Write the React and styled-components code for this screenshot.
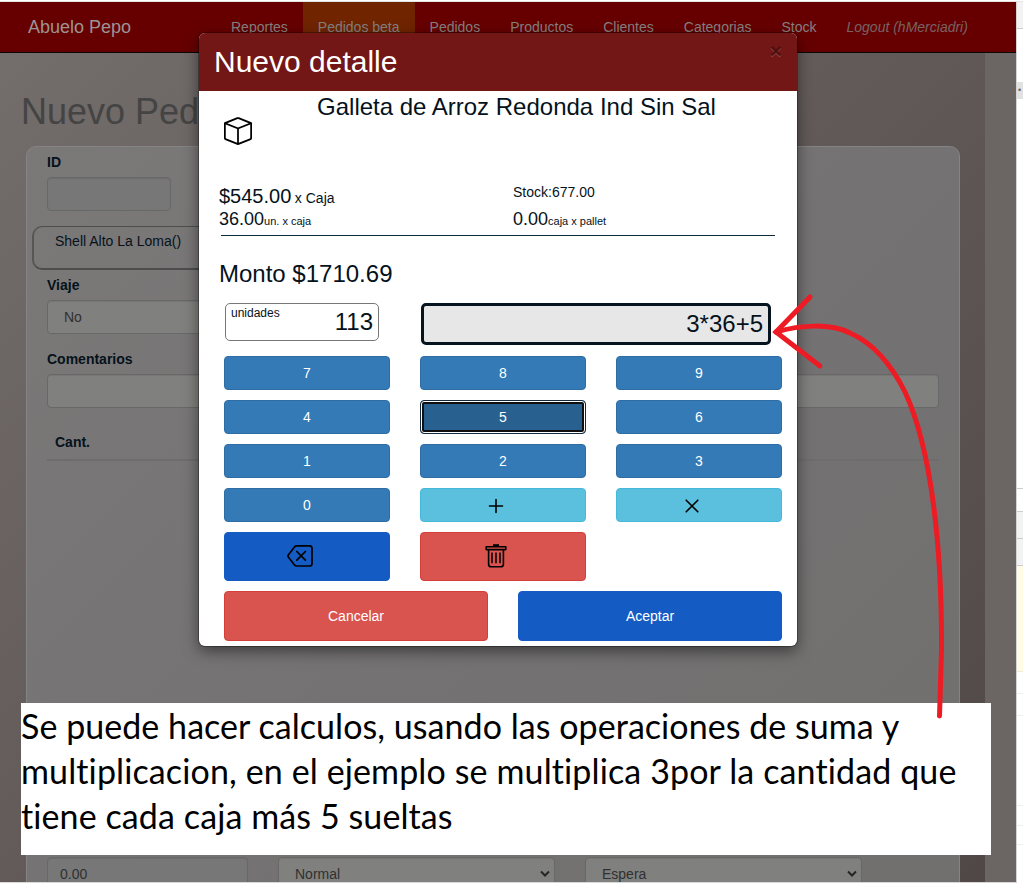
import React from "react";
import styled, { createGlobalStyle, css } from "styled-components";
import { BsBox } from "react-icons/bs";

const Global = createGlobalStyle`
  * { box-sizing: border-box; }
  body { margin: 0; background: #fff; font: 14px/20px "Liberation Sans", Arial, sans-serif; color: #05121c; overflow: hidden; }
  button { font: inherit; }
`;

const Screen = styled.div`
  position: relative;
  display: grid;
  grid-template-columns: 1016px 7px;
  width: 1023px;
  height: 889px;
  padding-top: 2px;
  background: linear-gradient(#e4e4e4, #e4e4e4) 0 1px / 100% 1px no-repeat, #fff;
  overflow: hidden;
`;
const Page = styled.div`
  display: flex;
  flex-direction: column;
  height: 881px;
  background: #6b6664;
  border-bottom: 1px solid #d8d8d8;
  overflow: hidden;
`;
const Navbar = styled.nav`
  display: flex;
  flex: none;
  height: 51px;
  padding-left: 28px;
  background: #660000;
  border-bottom: 1px solid #080808;
  color: #858080;
`;
const Brand = styled.div`
  width: 188px;
  padding-top: 15px;
  font-size: 18px;
  color: #9b9494;
`;
const NavLink = styled.a`
  padding: 15px;
  background: ${(p) => (p.$active ? "#702400" : "transparent")};
  font-style: ${(p) => (p.$italic ? "italic" : "normal")};
  color: ${(p) => (p.$italic ? "#766363" : "inherit")};
`;
const Content = styled.main`
  width: 985px;
  flex: 1;
  min-height: 0;
  padding: 39px 25px 0 26px;
  background: linear-gradient(135deg, #736d6b 0%, #615a59 48%, #4f4847 100%);
  overflow: hidden;
`;
const Heading = styled.h1`
  margin: 0 0 14px -5px;
  font-size: 36px;
  line-height: 40px;
  font-weight: 400;
  color: #444;
`;
const Panel = styled.section`
  width: 934px;
  height: 760px;
  padding: 5px 20px;
  border: 1px solid #858383;
  border-radius: 10px;
  background: linear-gradient(135deg, #7b7978 0%, #747273 50%, #71706e 100%);
`;
const Label = styled.label`
  display: block;
  height: 20px;
  margin-bottom: 5px;
  font-weight: 700;
`;
const Field = styled.div`
  display: flex;
  align-items: center;
  justify-content: space-between;
  width: ${(p) => p.$w}px;
  height: 34px;
  margin-bottom: ${(p) => p.$mb || 0}px;
  padding: 0 ${(p) => (p.$select ? 4 : 12)}px 0 ${(p) => p.$pad || 12}px;
  border: 1px solid #686868;
  border-radius: 4px;
  background: ${(p) => (p.$readOnly ? "#777777" : "#80807f")};
  box-shadow: inset 0 1px 1px rgba(0, 0, 0, 0.08);
  color: #303030;
`;
const ClientBox = styled.div`
  width: 400px;
  height: 44px;
  margin: 0 0 5px -15px;
  padding: 4px 21px;
  border: 2px solid #4c4e4e;
  border-top-width: 1px;
  border-left-color: #555757;
  border-radius: 10px;
`;
const TableHead = styled.div`
  height: 37px;
  padding: 8px;
  border-bottom: 2px solid #6e6d6d;
  font-weight: 700;
`;
const TotalsRow = styled.div`
  display: flex;
  gap: 30px;
  margin-top: 396px;
`;
const Rail = styled.aside`
  display: flex;
  flex-direction: column;
  height: 881px;
  border-left: 1px solid #d4d4d4;
`;
const RailCell = styled.div`
  flex: none;
  height: ${(p) => p.$h}px;
  background: ${(p) => p.$bg || "#fff"};
  border-bottom: ${(p) => (p.$line ? `1px solid ${p.$line}` : "0")};
  font-size: 9px;
  padding-left: 1px;
  line-height: 17px;
  color: #666;
  overflow: hidden;
`;

const Modal = styled.section`
  position: absolute;
  left: 199px;
  top: 33px;
  width: 598px;
  height: 613px;
  border-radius: 6px;
  background: #fff;
  box-shadow: 0 0 0 1px rgba(0, 0, 0, 0.28), 0 5px 15px rgba(0, 0, 0, 0.5);
  overflow: hidden;
`;
const ModalHeader = styled.header`
  display: flex;
  justify-content: space-between;
  height: 58px;
  padding: 8px 15px 0;
  background: #731616;
  color: #fff;
`;
const ModalTitle = styled.h2`
  margin: 0;
  font-size: 30px;
  line-height: 42px;
  font-weight: 400;
`;
const Close = styled.button`
  height: 20px;
  padding: 0;
  border: 0;
  background: none;
  font-size: 21px;
  line-height: 18px;
  font-weight: 700;
  color: #501010;
  text-shadow: 0 1px 0 #94494a;
`;
const ProductRow = styled.div`
  display: grid;
  grid-template-columns: 53px 529px;
  height: 91px;
  svg { margin: 26px 0 0 25px; }
`;
const ProductName = styled.h3`
  margin: 0;
  padding-top: 2px;
  text-align: center;
  font-size: 24px;
  line-height: 28px;
  font-weight: 400;
`;
const Facts = styled.div`
  display: grid;
  grid-template-columns: 294px 1fr;
  grid-template-rows: 24px 25px;
  height: 54px;
  margin: 0 22px;
  border-bottom: 1px solid #082a3a;
`;
const Fact = styled.div`
  margin-left: -2px;
  padding-top: ${(p) => p.$top || 0}px;
  font-size: ${(p) => p.$size}px;
  line-height: ${(p) => p.$line || 24}px;
  white-space: nowrap;
`;
const Small = styled.small`
  margin-left: ${(p) => p.$shift || 0}px;
  font-size: ${(p) => p.$size}px;
`;
const Amount = styled.div`
  margin: 24px 0 0 20px;
  height: 43px;
  font-size: 24px;
  line-height: 28px;
`;
const Readouts = styled.div`
  display: flex;
  justify-content: space-between;
  height: 53px;
  margin: 0 26px;
`;
const Units = styled.div`
  display: flex;
  justify-content: space-between;
  width: 154px;
  height: 38px;
  padding: 0 5px;
  border: 1px solid #777;
  border-radius: 5px;
  font-size: 24px;
  line-height: 36px;
`;
const UnitsLabel = styled.span`
  font-size: 12px;
  line-height: 18px;
`;
const Expression = styled.div`
  width: 350px;
  height: 42px;
  padding-right: 5px;
  border: 3px solid #05141f;
  border-radius: 5px;
  background: #e7e7e7;
  text-align: right;
  font-size: 24px;
  line-height: 36px;
`;
const Keys = styled.div`
  display: grid;
  grid-template-columns: repeat(6, 68px);
  grid-template-rows: repeat(4, 34px) 49px 50px;
  column-gap: 30px;
  row-gap: 10px;
  margin: 0 15px 0 25px;
`;
const tones = {
  primary: ["#337ab7", "#2e6da4"],
  info: ["#5bc0de", "#46b8da"],
  danger: ["#d9534f", "#d43f3a"],
  accept: ["#145bc4", "#145bc4"],
};
const Key = styled.button`
  display: flex;
  align-items: center;
  justify-content: center;
  grid-column: span ${(p) => p.$span || 2};
  padding: 0;
  border: 1px solid ${(p) => tones[p.$tone][1]};
  border-radius: 4px;
  background: ${(p) => tones[p.$tone][0]};
  color: #fff;
  svg { margin-right: 14px; margin-bottom: 1px; }
  ${(p) => p.$focus && css`
    background: #286090;
    border-color: #122b40;
    box-shadow: inset 0 0 0 1px #fff, inset 0 0 0 3px #101010;
  `}
`;
const Note = styled.p`
  position: absolute;
  left: 21px;
  top: 703px;
  width: 970px;
  height: 152px;
  margin: 0;
  background: #fff;
  color: #000;
  font-family: Lato, "Open Sans", sans-serif;
  font-size: 34px;
  line-height: 45px;
  font-variant-ligatures: none;
  white-space: nowrap;
`;
const NoteLine = styled.span`
  display: block;
  letter-spacing: ${(p) => p.$track}px;
`;
const Arrow = styled.svg`
  position: absolute;
  left: 770px;
  top: 290px;
  pointer-events: none;
`;

const Chevron = () => (
  <svg width="10" height="8" viewBox="0 0 10 8" fill="none" stroke="#252525" strokeWidth="2">
    <path d="M1 1.5 5 5.5 9 1.5" />
  </svg>
);
const Operator = styled.svg.attrs({ width: 16, height: 16, viewBox: "0 0 16 16" })`
  margin-top: 3px;
  fill: none;
  stroke: #000;
  stroke-width: 1.6;
  stroke-linecap: round;
`;
const Backspace = () => (
  <svg width="26" height="24" viewBox="0 0 26 24" fill="none" stroke="#000" strokeWidth="1.7" strokeLinecap="round" strokeLinejoin="round">
    <path d="M9.5 1.8H22.5Q25 1.8 25 4.3V19.5Q25 22 22.5 22H9.5Q8.5 22 7.7 21.2L1.3 13Q.7 12 1.3 11L7.7 2.7Q8.5 1.8 9.5 1.8Z" />
    <path d="m9.8 7.5 8.6 8.6m0-8.6-8.6 8.6" />
  </svg>
);
const Trash = () => (
  <svg width="22" height="24" viewBox="0 0 22 24" fill="none" stroke="#000" strokeWidth="1.6" strokeLinejoin="round">
    <path d="M1.2 2.8H20.8V5.6H1.2ZM3.6 5.8V20.2Q3.6 22.8 6.2 22.8H15.8Q18.4 22.8 18.4 20.2V5.8" />
    <path d="M8 1.2H14" strokeWidth="2" />
    <path d="M7 8.5V19.3M11 8.5V19.3M15 8.5V19.3" strokeWidth="1.5" />
  </svg>
);

const links = ["Reportes", "Pedidos beta", "Pedidos", "Productos", "Clientes", "Categorias", "Stock"];
const digits = ["7", "8", "9", "4", "5", "6", "1", "2", "3", "0"];
const rail = [
  [27, "#f3f3f3", "#ccc"], [53, "#fff"], [17, "#e1e1e1", null, "•"], [390, "#fff", "#ccc"],
  [23, "#fff", "#ccc"], [27, "#f3f3f3", "#ccc"], [27, "#f3f3f3", "#ccc"],
  [106, "#fffbe5", "#f2edcf"], [22, "#fff", "#eee"], [22, "#fff", "#eee"],
  [90, "#fff", "#eee"], [20, "#fff", "#eee"], [19, "#fff", "#eee"],
];

export default function App() {
  return (
    <Screen>
      <Global />
      <Page>
        <Navbar>
          <Brand>Abuelo Pepo</Brand>
          {links.map((l) => <NavLink key={l} $active={l === "Pedidos beta"}>{l}</NavLink>)}
          <NavLink $italic>Logout (hMerciadri)</NavLink>
        </Navbar>
        <Content>
          <Heading>Nuevo Pedido</Heading>
          <Panel>
            <Label>ID</Label>
            <Field $w={124} $mb={15} $readOnly />
            <ClientBox>Shell Alto La Loma()</ClientBox>
            <Label>Viaje</Label>
            <Field $w={277} $mb={15} $pad={16}>No</Field>
            <Label>Comentarios</Label>
            <Field $w={892} $mb={16} />
            <TableHead>Cant.</TableHead>
            <TotalsRow>
              <Field $w={201} $readOnly>0.00</Field>
              <Field $w={277} $pad={16} $select>Normal<Chevron /></Field>
              <Field $w={277} $pad={16} $select>Espera<Chevron /></Field>
            </TotalsRow>
          </Panel>
        </Content>
      </Page>
      <Rail>
        {rail.map(([h, bg, line, mark], i) => <RailCell key={i} $h={h} $bg={bg} $line={line}>{mark}</RailCell>)}
      </Rail>

      <Modal>
        <ModalHeader>
          <ModalTitle>Nuevo detalle</ModalTitle>
          <Close>×</Close>
        </ModalHeader>
        <ProductRow>
          <BsBox size={28} color="#000" />
          <ProductName>Galleta de Arroz Redonda Ind Sin Sal</ProductName>
        </ProductRow>
        <Facts>
          <Fact $size={20} $top={2}>$545.00 <Small $size={14} $shift={-2}>x Caja</Small></Fact>
          <Fact $size={14} $line={20}>Stock:677.00</Fact>
          <Fact $size={18} $top={1}>36.00<Small $size={11}>un. x caja</Small></Fact>
          <Fact $size={18} $top={1}>0.00<Small $size={11}>caja x pallet</Small></Fact>
        </Facts>
        <Amount>Monto $1710.69</Amount>
        <Readouts>
          <Units><UnitsLabel>unidades</UnitsLabel>113</Units>
          <Expression>3*36+5</Expression>
        </Readouts>
        <Keys>
          {digits.map((d) => <Key key={d} $tone="primary" $focus={d === "5"}>{d}</Key>)}
          <Key $tone="info"><Operator><path d="M8 1.5v13M1.5 8h13" /></Operator></Key>
          <Key $tone="info"><Operator><path d="m2.2 2.2 11.6 11.6M13.8 2.2 2.2 13.8" /></Operator></Key>
          <Key $tone="accept"><Backspace /></Key>
          <Key $tone="danger"><Trash /></Key>
          <Key $tone="danger" $span={3}>Cancelar</Key>
          <Key $tone="accept" $span={3}>Aceptar</Key>
        </Keys>
      </Modal>

      <Note>
        <NoteLine $track={0.05}>Se puede hacer calculos, usando las operaciones de suma y</NoteLine>
        <NoteLine $track={0.12}>multiplicacion, en el ejemplo se multiplica 3por la cantidad que</NoteLine>
        <NoteLine $track={0.1}>tiene cada caja más 5 sueltas</NoteLine>
      </Note>
      <Arrow width="180" height="435" viewBox="770 290 180 435" fill="none" stroke="#ed1c24" strokeWidth="5" strokeLinecap="round">
        <path d="M810 297 776 332 820 366" />
        <path d="M776 332C800 325 830 323 850 333C873 343 892 366 905 392C932 450 942 550 941.5 650L939.5 716" />
      </Arrow>
    </Screen>
  );
}
